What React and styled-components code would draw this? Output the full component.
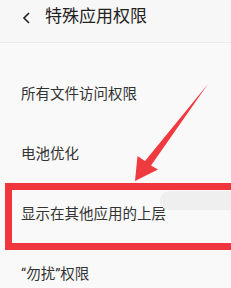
import React from 'react';
import styled, {createGlobalStyle} from 'styled-components';

const GlobalStyle = createGlobalStyle`
  html, body {
    margin: 0;
    padding: 0;
    background: #f9f9f9;
  }
  body {
    font-family: Roboto, "Noto Sans CJK SC", sans-serif;
  }
`;

const Page = styled.div`
  position: relative;
  width: 231px;
  height: 288px;
  overflow: hidden;
  background: #f9f9f9;
`;

const Header = styled.header`
  height: 43px;
  box-sizing: border-box;
  padding: 5px 0 0 22px;
  display: flex;
  align-items: flex-start;
  gap: 13px;
  background: #f7f7f7;
  border-bottom: 1px solid #ececec;
`;

const BackIcon = styled.svg`
  width: 10px;
  height: 12px;
  margin-top: 7px;
`;

const Title = styled.h1`
  margin: 0;
  font-size: 17px;
  font-weight: 400;
  line-height: 22px;
  color: #222;
`;

const List = styled.ul`
  list-style: none;
  margin: 0;
  padding: 19px 0 0;
`;

const Item = styled.li`
  height: 60px;
  padding-left: 21px;
  display: flex;
  align-items: center;
  font-size: 14.5px;
  color: #333;
`;

// annotation overlays drawn on top of the screenshot
const Highlight = styled.div`
  position: absolute;
  left: 5px;
  top: 183px;
  width: 240px;
  height: 67px;
  box-sizing: border-box;
  border: 7px solid #f0353d;
`;

const Toast = styled.div`
  position: absolute;
  left: 160px;
  top: 191px;
  width: 90px;
  height: 19px;
  border-radius: 10px;
  background: #efefef;
`;

const Arrow = styled.svg`
  position: absolute;
  left: 0;
  top: 0;
  width: 231px;
  height: 288px;
  pointer-events: none;
`;

// -----------------------------------------------------------------------------

const items = ['所有文件访问权限', '电池优化', '显示在其他应用的上层', '“勿扰”权限'];

const App = () => (
  <Page>
    <GlobalStyle />
    <Header>
      <BackIcon viewBox="0 0 10 12">
        <path d="M7 1 L2 6 L7 11" fill="none" stroke="#222" strokeWidth="1.6" />
      </BackIcon>
      <Title>特殊应用权限</Title>
    </Header>
    <Toast />
    <List>
      {items.map(text => (
        <Item key={text}>{text}</Item>
      ))}
    </List>
    <Highlight />
    <Arrow viewBox="0 0 231 288">
      <polygon
        points="208,84 151,165.5 158,169.5 135,181 137.5,156 145,161"
        fill="#ef3a40"
      />
    </Arrow>
  </Page>
);

export default App;
